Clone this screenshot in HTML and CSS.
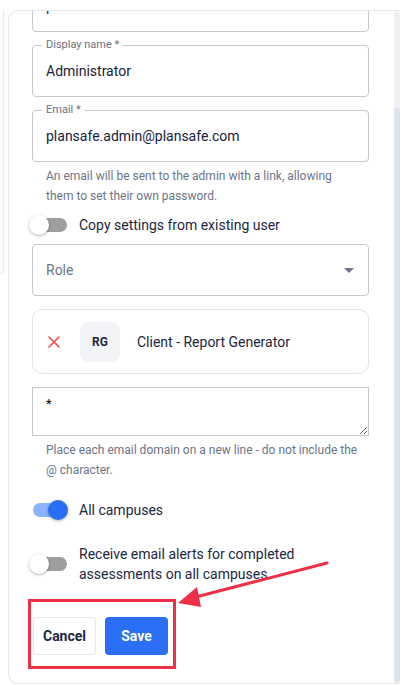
FILE: index.html
```html
<!DOCTYPE html>
<html lang="en">
<head>
    <meta charset="UTF-8">
    <meta name="viewport" content="width=device-width, initial-scale=1.0">
    <title>Add Administrator</title>
    <link rel="stylesheet" href="styles.css">
</head>
<body>
    <div class="page">
        <div class="side-panel"></div>
        <div class="card">
            <div class="card-body">
                <div class="field field-clipped">
                    <span class="field-value">plansafe.admin</span>
                </div>
                <div class="field">
                    <span class="field-label">Display name *</span>
                    <span class="field-value">Administrator</span>
                </div>
                <div class="field">
                    <span class="field-label">Email *</span>
                    <span class="field-value">plansafe.admin@plansafe.com</span>
                </div>
                <p class="helper">An email will be sent to the admin with a link, allowing them to set their own password.</p>

                <div class="toggle-row">
                    <span class="switch"><span class="track"></span><span class="thumb"></span></span>
                    <span class="toggle-text">Copy settings from existing user</span>
                </div>

                <div class="field select">
                    <span class="placeholder">Role</span>
                    <span class="caret"></span>
                </div>

                <div class="role-card">
                    <svg class="remove" width="12" height="12" viewBox="0 0 12 12">
                        <path d="M1 1 L11 11 M11 1 L1 11" stroke="#ef4b4b" stroke-width="1.6" stroke-linecap="round"/>
                    </svg>
                    <span class="avatar">RG</span>
                    <span class="role-name">Client - Report Generator</span>
                </div>

                <textarea class="domains">*</textarea>
                <p class="helper">Place each email domain on a new line - do not include the @ character.</p>

                <div class="toggle-row toggle-on">
                    <span class="switch on"><span class="track"></span><span class="thumb"></span></span>
                    <span class="toggle-text">All campuses</span>
                </div>

                <div class="toggle-row toggle-alerts">
                    <span class="switch"><span class="track"></span><span class="thumb"></span></span>
                    <span class="toggle-text">Receive email alerts for completed assessments on all campuses</span>
                </div>

                <div class="highlight">
                    <button class="btn btn-cancel">Cancel</button>
                    <button class="btn btn-save">Save</button>
                </div>
            </div>
            <div class="scrollbar"><div class="scroll-thumb"></div></div>
        </div>

        <svg class="arrow" width="403" height="685" viewBox="0 0 403 685">
            <line x1="327" y1="563" x2="192" y2="598" stroke="#ee2f48" stroke-width="3" stroke-linecap="round"/>
            <polygon points="178,603 197,587 201,607" fill="#ee2f48"/>
        </svg>
    </div>
</body>
</html>
```

FILE: styles.css
```css
body {
    margin: 0;
    padding: 0;
    background: #fff;
    font-family: Roboto, "Liberation Sans", Arial, sans-serif;
    color: #1b2741;
}
.page {
    position: relative;
    display: flex;
    align-items: flex-start;
    padding-top: 10px;
    height: 675px;
    overflow: hidden;
}
.side-panel {
    width: 3px;
    height: 262px;
    border: 1px solid #e6eaf0;
    border-left: none;
    border-top: none;
    border-radius: 0 0 6px 0;
    margin-right: 4px;
}
.card {
    width: 391px;
    height: 672px;
    border: 1px solid #e3e6eb;
    border-right: none;
    border-radius: 10px 0 0 10px;
    display: flex;
    overflow: hidden;
}
.card-body {
    flex: 1;
    padding: 0 25px 0 23px;
}
.scrollbar {
    width: 6px;
    background: #eef0f4;
    border-radius: 3px;
    display: flex;
    flex-direction: column;
}
.scroll-thumb {
    margin-top: 97px;
    flex: 1;
    background: #dfe3ea;
    border-radius: 3px;
}
.field {
    position: relative;
    height: 50px;
    border: 1px solid #c4c7cc;
    border-radius: 4px;
    display: flex;
    align-items: center;
    padding: 0 13px;
    margin-bottom: 13px;
}
.field-clipped {
    margin-top: -31px;
}
.field-value {
    font-size: 14px;
    color: #17223b;
}
.field-label {
    position: absolute;
    top: -7px;
    left: 9px;
    padding: 0 4px;
    background: #fff;
    font-size: 11px;
    line-height: 12px;
    color: #6b7280;
}
.helper {
    margin: -8px 0 0;
    padding: 0 9px 0 14px;
    font-size: 12px;
    line-height: 19.5px;
    color: #6b7587;
}
.toggle-row {
    display: flex;
    align-items: center;
    height: 38px;
}
.switch {
    position: relative;
    width: 38px;
    height: 20px;
    margin-left: -3px;
    margin-right: 12px;
    flex-shrink: 0;
}
.track {
    position: absolute;
    left: 4px;
    right: 0;
    top: 3px;
    height: 14px;
    border-radius: 7px;
    background: #9e9e9e;
}
.thumb {
    position: absolute;
    left: 0;
    top: 0;
    width: 20px;
    height: 20px;
    border-radius: 50%;
    background: #fff;
    box-shadow: 0 1px 3px rgba(0, 0, 0, 0.3);
}
.switch.on .track {
    background: #8db3fb;
}
.switch.on .thumb {
    left: auto;
    right: -1px;
    background: #2b6ef6;
}
.toggle-text {
    font-size: 14px;
    line-height: 20px;
}
.select {
    justify-content: space-between;
}
.placeholder {
    font-size: 14px;
    color: #6b7587;
}
.caret {
    width: 0;
    height: 0;
    border-left: 5.5px solid transparent;
    border-right: 5.5px solid transparent;
    border-top: 5.5px solid #6b7587;
    margin-right: 1px;
}
.role-card {
    display: flex;
    align-items: center;
    height: 63px;
    border: 1px solid #e1e4e9;
    border-radius: 10px;
    padding: 0 15px;
    margin-bottom: 13px;
}
.remove {
    flex-shrink: 0;
}
.avatar {
    width: 40px;
    height: 40px;
    margin-left: 20px;
    margin-right: 17px;
    border-radius: 8px;
    background: #f3f4f7;
    display: flex;
    align-items: center;
    justify-content: center;
    font-size: 12px;
    font-weight: 700;
    color: #1b2741;
}
.role-name {
    font-size: 14px;
}
.domains {
    display: block;
    box-sizing: border-box;
    width: 100%;
    height: 49px;
    margin: 0 0 13px;
    padding: 8px 13px;
    border: 1px solid #c8c8c8;
    border-radius: 0;
    font-family: Roboto, "Liberation Sans", Arial, sans-serif;
    font-size: 13px;
    color: #000;
    resize: vertical;
}
.toggle-on {
    margin-top: 11px;
}
.toggle-alerts {
    margin-top: 15px;
    height: 40px;
}
.highlight {
    display: inline-flex;
    gap: 9px;
    margin: 15px 0 0 -4px;
    padding: 15px 5px 11px 2px;
    border: 3px solid #ee2f48;
}
.btn {
    height: 38px;
    width: 63px;
    border-radius: 4px;
    font-family: Roboto, "Liberation Sans", Arial, sans-serif;
    font-size: 14px;
    font-weight: 700;
    cursor: pointer;
}
.btn-cancel {
    background: #fff;
    border: 1px solid #e5e7eb;
    color: #1b2741;
}
.btn-save {
    background: #2b6ff6;
    border: none;
    color: #fff;
}
.arrow {
    position: absolute;
    left: 0;
    top: 0;
    pointer-events: none;
}
```
